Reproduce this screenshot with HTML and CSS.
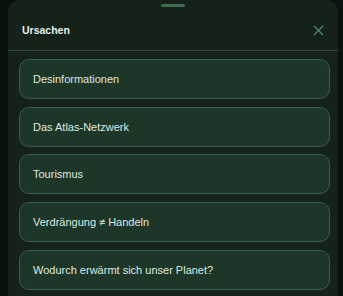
FILE: index.html
```html
<!DOCTYPE html>
<html lang="de">
<head>
<meta charset="utf-8">
<link rel="stylesheet" href="styles.css">
</head>
<body>
<div class="sheet">
  <div class="handle"></div>
  <div class="header">
    <h2 class="title">Ursachen</h2>
    <button class="close" aria-label="Schließen">
      <svg width="11" height="11" viewBox="0 0 11 11"><path d="M1 1L10 10M10 1L1 10" stroke="#4d8a62" stroke-width="1.3" fill="none"/></svg>
    </button>
  </div>
  <div class="list">
    <div class="item">Desinformationen</div>
    <div class="item">Das Atlas-Netzwerk</div>
    <div class="item">Tourismus</div>
    <div class="item">Verdrängung ≠ Handeln</div>
    <div class="item">Wodurch erwärmt sich unser Planet?</div>
  </div>
</div>
</body>
</html>
```
FILE: styles.css
```css
html, body {
  margin: 0;
  padding: 0;
  height: 100%;
  overflow: hidden;
}
body {
  background: #0a120d;
  font-family: "Liberation Sans", Arial, sans-serif;
}
.sheet {
  margin-left: 8px;
  width: 330px;
  height: 296px;
  background: #14221a;
  border-radius: 12px 12px 0 0;
  padding-top: 4px;
  box-sizing: border-box;
}
.handle {
  width: 24px;
  height: 3px;
  margin: 0 auto;
  background: #3f6b4e;
  border-radius: 2px;
}
.header {
  margin-top: 3px;
  height: 41px;
  box-sizing: border-box;
  border-bottom: 1px solid #2c4836;
  display: flex;
  align-items: center;
  justify-content: space-between;
  padding: 0 14px 0 14px;
}
.title {
  margin: 0;
  font-size: 10.5px;
  font-weight: 700;
  color: #e6efe9;
}
.close {
  background: none;
  border: 0;
  padding: 0;
  width: 11px;
  height: 11px;
  display: flex;
}
.list {
  display: flex;
  flex-direction: column;
  gap: 7.7px;
  padding: 8px 8px 0 11px;
}
.item {
  height: 40px;
  box-sizing: border-box;
  display: flex;
  align-items: center;
  padding-left: 13px;
  background: #1d3627;
  border: 1px solid #395c45;
  border-radius: 10px;
  color: #dde9e1;
  font-size: 11px;
}
```
